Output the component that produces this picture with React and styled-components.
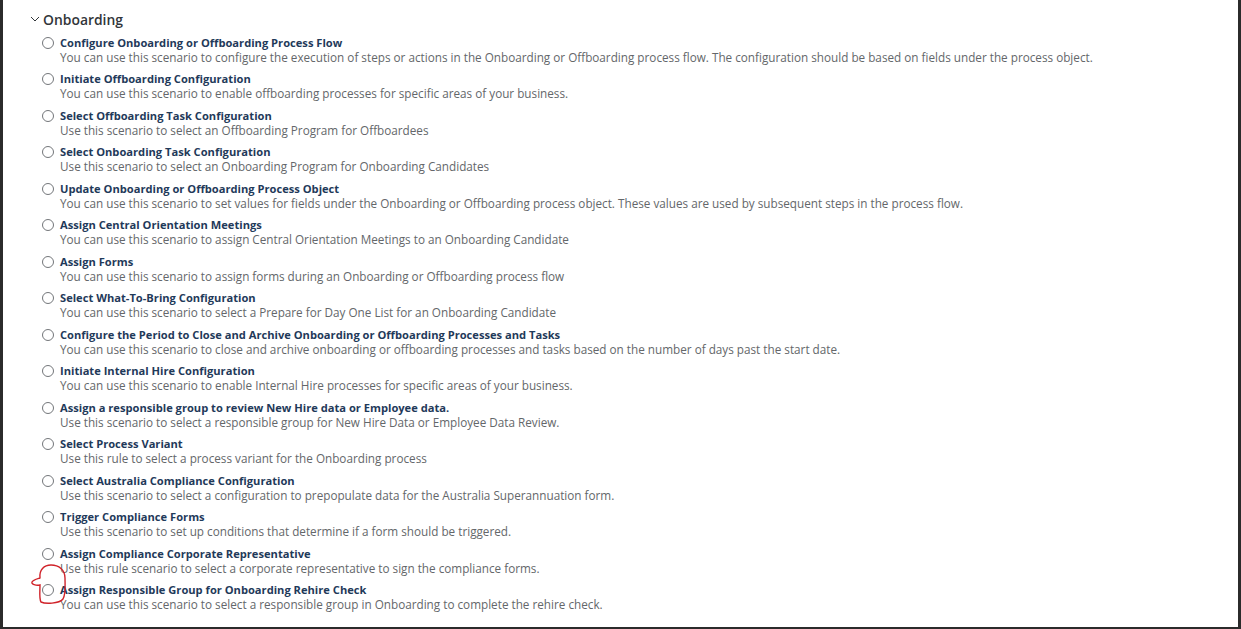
import React from 'react'
import styled, { createGlobalStyle } from 'styled-components'

const Global = createGlobalStyle`
  html, body {
    margin: 0;
    padding: 0;
    background: #2b2b2b;
  }
  body {
    font-family: 'Open Sans', 'Noto Sans', sans-serif;
  }
`

const Frame = styled.div`
  box-sizing: border-box;
  width: 1241px;
  height: 629px;
  background: #fff;
  border-left: 3px solid #2b2b2b;
  border-right: 3px solid #2b2b2b;
  border-bottom: 2px solid #2b2b2b;
  padding: 10px 0 0 27px;
  position: relative;
  overflow: hidden;
`

const Header = styled.div`
  display: flex;
  align-items: center;
  gap: 3px;
  height: 18px;
  font-size: 13.9px;
  font-weight: 600;
  color: #32363a;
`

const List = styled.ul`
  list-style: none;
  margin: 8px 0 0 12px;
  padding: 0;
  display: flex;
  flex-direction: column;
  gap: 8.47px;
`

const Item = styled.li`
  display: grid;
  grid-template-columns: 18px 1fr;
  line-height: 14px;
`

const Radio = styled.span`
  box-sizing: border-box;
  width: 12px;
  height: 12px;
  margin-top: 1px;
  border: 1px solid #73767a;
  border-radius: 50%;
`

const Title = styled.div`
  font-size: 11.15px;
  font-weight: 700;
  color: #1f3a5a;
`

const Desc = styled.div`
  grid-column: 2;
  font-size: 11.73px;
  color: #64676a;
`

const Mark = styled.svg`
  position: absolute;
  left: 26px;
  top: 562px;
  pointer-events: none;
`

const items = [
  ['Configure Onboarding or Offboarding Process Flow', 'You can use this scenario to configure the execution of steps or actions in the Onboarding or Offboarding process flow. The configuration should be based on fields under the process object.'],
  ['Initiate Offboarding Configuration', 'You can use this scenario to enable offboarding processes for specific areas of your business.'],
  ['Select Offboarding Task Configuration', 'Use this scenario to select an Offboarding Program for Offboardees'],
  ['Select Onboarding Task Configuration', 'Use this scenario to select an Onboarding Program for Onboarding Candidates'],
  ['Update Onboarding or Offboarding Process Object', 'You can use this scenario to set values for fields under the Onboarding or Offboarding process object. These values are used by subsequent steps in the process flow.'],
  ['Assign Central Orientation Meetings', 'You can use this scenario to assign Central Orientation Meetings to an Onboarding Candidate'],
  ['Assign Forms', 'You can use this scenario to assign forms during an Onboarding or Offboarding process flow'],
  ['Select What-To-Bring Configuration', 'You can use this scenario to select a Prepare for Day One List for an Onboarding Candidate'],
  ['Configure the Period to Close and Archive Onboarding or Offboarding Processes and Tasks', 'You can use this scenario to close and archive onboarding or offboarding processes and tasks based on the number of days past the start date.'],
  ['Initiate Internal Hire Configuration', 'You can use this scenario to enable Internal Hire processes for specific areas of your business.'],
  ['Assign a responsible group to review New Hire data or Employee data.', 'Use this scenario to select a responsible group for New Hire Data or Employee Data Review.'],
  ['Select Process Variant', 'Use this rule to select a process variant for the Onboarding process'],
  ['Select Australia Compliance Configuration', 'Use this scenario to select a configuration to prepopulate data for the Australia Superannuation form.'],
  ['Trigger Compliance Forms', 'Use this scenario to set up conditions that determine if a form should be triggered.'],
  ['Assign Compliance Corporate Representative', 'Use this rule scenario to select a corporate representative to sign the compliance forms.'],
  ['Assign Responsible Group for Onboarding Rehire Check', 'You can use this scenario to select a responsible group in Onboarding to complete the rehire check.'],
]

const App = () => {
  return (
    <>
      <Global />
      <Frame>
        <Header>
          <svg width="10" height="10" viewBox="0 0 10 10">
            <path d="M1 3 L5 7 L9 3" fill="none" stroke="#32363a" strokeWidth="1" />
          </svg>
          Onboarding
        </Header>
        <List>
          {items.map(([title, desc]) => (
            <Item key={title}>
              <Radio />
              <Title>{title}</Title>
              <Desc>{desc}</Desc>
            </Item>
          ))}
        </List>
        <Mark width="44" height="48" viewBox="0 0 44 48">
          <path
            d="M11 16 C10 8 15 3 22 3 C30 3 36 8 36 16 C36 24 37 32 34 37 C30 42 16 42 12 40 C10 37 11 28 11 23 C7 24 2 22 3 20 C4 18 8 17 11 16"
            fill="none"
            stroke="#d0232a"
            strokeWidth="1.4"
            strokeLinecap="round"
          />
        </Mark>
      </Frame>
    </>
  )
}

export default App
